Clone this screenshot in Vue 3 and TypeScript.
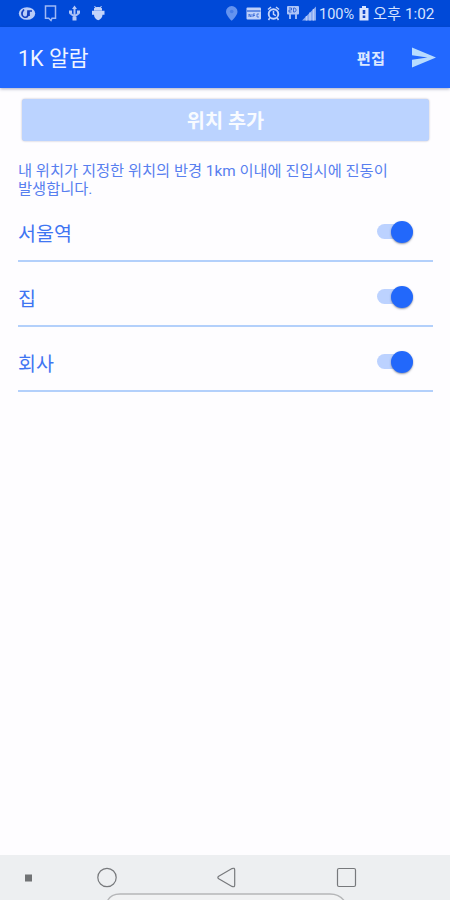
<script setup lang="ts">
import { ref } from 'vue'

interface Place {
  name: string
  enabled: boolean
}

const places = ref<Place[]>([
  { name: '서울역', enabled: true },
  { name: '집', enabled: true },
  { name: '회사', enabled: true },
])
</script>

<template>
  <div class="screen">
    <div class="status">
      <svg class="notices" viewBox="0 0 110 27" fill="none">
        <ellipse cx="27" cy="13.5" rx="8.2" ry="6.3" fill="#b9ccf8" />
        <path d="M24 9.500c-3 3-2.500 6.500 0 7.500 4 1 4-1 4-6h4M29 11v5" stroke="#123fc0" stroke-width="1.700" />
        <path d="M45.500 6h10v12.300h-3.500l-1 2.200-2.300-2.200h-3.200z" stroke="#9fb9f5" stroke-width="1.500" />
        <path d="M74.500 8v11M70.500 12v1.500l4 3 4-3V12" stroke="#a9c0f6" stroke-width="2" />
        <path d="M74.500 5.500l2.500 3.500h-5zM69 10.500h3v3h-3zM77 10.500h3v3h-3zM72.500 17h4v3.500h-4z" fill="#b4c8f7" />
        <path d="M94 8.500c1-2 7-2 8 0v2h-8zM92 10.800h12.500v4h-2c0 3-2 4.500-4.300 5.500-2.200-1-4.200-2.500-4.200-5.500h-2z" fill="#c3d4fa" />
        <path d="M94.500 6l1.500 2M101.500 6l-1.500 2" stroke="#c3d4fa" />
      </svg>
      <div class="system">
        <svg class="indicators" viewBox="224 0 94 27" fill="none">
          <path d="M231.700 6a5.700 5.700 0 0 0-5.700 5.700c0 4 5.700 9 5.700 9s5.800-5 5.800-9A5.700 5.700 0 0 0 231.700 6z" fill="#6493ef" />
          <circle cx="231.700" cy="11.500" r="1.800" fill="#477de8" />
          <rect x="246.500" y="7.500" width="14.500" height="12" rx="1" fill="#bdd0fa" />
          <path d="M247 11h13.500" stroke="#0b49cf" />
          <path d="M249 17v-3l2 3v-3M253 17v-3h2M253 15.500h2M259 14h-2v3h2" stroke="#2b5fd6" stroke-width=".8" />
          <circle cx="273.500" cy="14" r="4.800" stroke="#c3d4fb" stroke-width="1.900" />
          <path d="M268 9.500l3-2.500M279 9.500L276 7M273.500 11v3.300l2.300 1.300M269.700 18l-1.200 2M277.300 18l1.200 2" stroke="#c3d4fb" stroke-width="1.500" />
          <rect x="287" y="6" width="12" height="8.500" rx="1" fill="#aec5f8" />
          <path d="M289 8h2.500v2H289v2h2.500M293.500 8v4h1.500l1.300-2-1.300-2z" stroke="#1f55d2" stroke-width=".8" />
          <path d="M290 14v5M296 14v5" stroke="#9bb7f5" stroke-width="2" />
          <path d="M302 20.500L316 6.500v14z" fill="#87a9f2" />
          <path d="M306.500 16v4.500M310 12.500v8M313.500 9v11.500" stroke="#b8ccfa" stroke-width="1.500" />
        </svg>
        <span class="percent">100%</span>
        <svg class="battery" viewBox="0 0 10 15">
          <path d="M3 0h4v2h2.500v12.500H.5V2H3z" fill="#d8e4ff" />
          <path d="M3.700 4h2.600v4H3.700zM3.700 9.500h2.600V12H3.700z" fill="#1248c9" />
        </svg>
        <span class="clock">오후 1:02</span>
      </div>
    </div>

    <header class="appbar">
      <h1>1K 알람</h1>
      <button class="edit">편집</button>
      <svg class="send" viewBox="0 0 24 21">
        <path d="M0 .5L24 10.500 0 20.500V12.700L15.500 10.500 0 8.300z" fill="#b8dcff" />
      </svg>
    </header>

    <main>
      <button class="add">위치 추가</button>
      <p class="hint">내 위치가 지정한 위치의 반경 1km 이내에 진입시에 진동이<br />발생합니다.</p>
      <ul>
        <li v-for="place in places" :key="place.name">
          <span class="name">{{ place.name }}</span>
          <button class="switch" :class="{ on: place.enabled }" @click="place.enabled = !place.enabled"></button>
        </li>
      </ul>
    </main>

    <nav>
      <svg viewBox="0 0 450 45" fill="none" stroke="#77797c">
        <rect x="25" y="19.500" width="7" height="7" fill="#717375" stroke="none" />
        <circle cx="107" cy="22.500" r="9.200" stroke-width="1.200" />
        <path d="M218.700 21.300L232 13.600q2.700-1.200 2.700 1.500v14.800q0 2.700-2.700 1.500L218.700 23.700q-1.700-1.200 0-2.400z" stroke-width="1.200" />
        <rect x="337.500" y="13.500" width="18" height="18" rx="1.500" stroke-width="1.200" />
        <path d="M107 47Q110 39 120 39H330Q340 39 345 47" fill="#f1f2f3" stroke="#b5b6b8" stroke-width="1.400" />
      </svg>
    </nav>
  </div>
</template>

<style>
body {
  margin: 0;
}
</style>

<style scoped>
.screen {
  width: 450px;
  height: 900px;
  display: flex;
  flex-direction: column;
  overflow: hidden;
  background: #fefdff;
  color: #3f75f2;
  font-family: Roboto, "Noto Sans CJK KR", sans-serif;
}
button {
  border: 0;
  padding: 0;
  background: none;
  font-family: inherit;
}
.status {
  height: 27px;
  flex: none;
  display: flex;
  justify-content: space-between;
  background: #0049d8;
  color: #d5e2ff;
}
.notices {
  width: 110px;
  height: 27px;
}
.system {
  display: flex;
  align-items: center;
  padding-right: 15px;
  white-space: nowrap;
}
.indicators {
  width: 94px;
  height: 27px;
}
.percent {
  width: 41px;
  padding: 2px 0 0 1px;
  box-sizing: border-box;
  font-size: 14.5px;
  line-height: 27px;
}
.battery {
  width: 10px;
  height: 15px;
  margin-right: 4px;
}
.clock {
  width: 62px;
  padding-top: 2px;
  font-size: 15.3px;
  line-height: 27px;
}
.appbar {
  height: 61px;
  flex: none;
  display: flex;
  align-items: center;
  box-sizing: border-box;
  padding: 0 14px 0 18px;
  background: #2268ff;
  box-shadow: 0 1px 3px rgba(40, 50, 100, 0.4);
  color: #eff5ff;
}
h1 {
  margin: 0 auto 0 0;
  padding-top: 2px;
  font-size: 21.5px;
  font-weight: 400;
  line-height: 30px;
}
.edit {
  margin-right: 27px;
  padding-bottom: 2px;
  color: #dce9ff;
  font-size: 15.3px;
  font-weight: 700;
}
.send {
  width: 24px;
  height: 21px;
}
main {
  flex: 1;
  padding: 11px 17px 0 18px;
}
.add {
  display: block;
  width: 407px;
  height: 42px;
  margin-left: 4px;
  padding-bottom: 2px;
  border-radius: 3px;
  background: #bbd3ff;
  box-shadow: 0 0 2px rgba(80, 80, 110, 0.45);
  color: #f8fbff;
  font-size: 19.7px;
  font-weight: 700;
}
.hint {
  margin: 21px 0 0;
  font-size: 15.3px;
  line-height: 18px;
  white-space: nowrap;
  color: #587fef;
}
ul {
  margin: -1px 0 0;
  padding: 0;
  list-style: none;
}
li {
  height: 65px;
  display: flex;
  justify-content: space-between;
  align-items: center;
  box-sizing: border-box;
  padding: 6px 20px 0 0;
  border-bottom: 2px solid #b3d0fb;
  font-size: 19.5px;
}
.name {
  padding-top: 1px;
}
.switch {
  width: 36px;
  height: 22px;
  display: flex;
  align-items: center;
}
.switch::before {
  content: "";
  width: 30px;
  height: 15px;
  border-radius: 8px;
  background: #bcd2ff;
}
.switch::after {
  content: "";
  width: 22px;
  height: 22px;
  flex: none;
  margin-left: -36px;
  border-radius: 50%;
  background: #f5f5f5;
  box-shadow: 0 1px 2px rgba(40, 50, 80, 0.5);
}
.switch.on::before {
  flex: none;
}
.switch.on::after {
  margin-left: -16px;
  background: #2268fb;
}
nav {
  height: 45px;
  flex: none;
  background: #edeff1;
}
nav svg {
  display: block;
  width: 450px;
  height: 45px;
}
</style>
